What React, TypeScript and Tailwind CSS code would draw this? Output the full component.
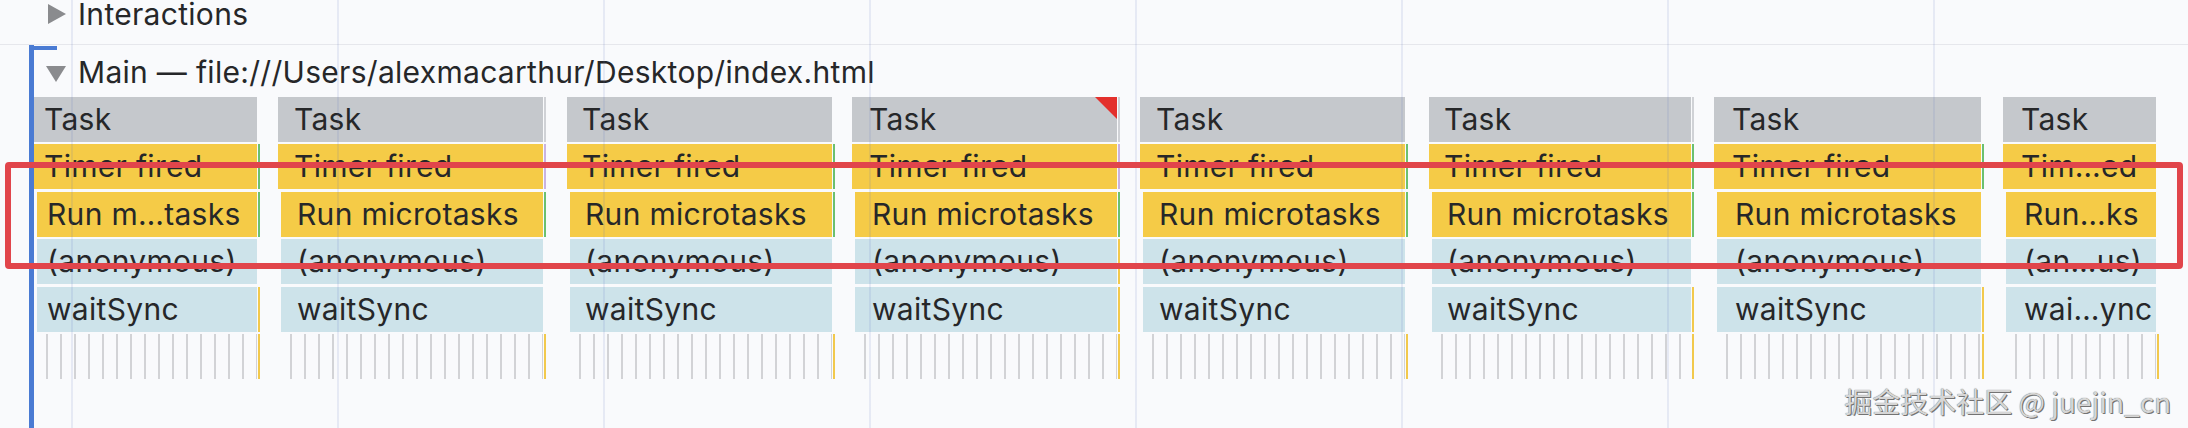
import React from 'react';

interface Column {
  wrap: string;
  pad: string;
  labels: string[];
  flag?: boolean;
  slivers: string[];
}

const columns: Column[] = [
  {
    wrap: 'w-[226px]',
    pad: 'pl-[10px]',
    labels: ['Task', 'Timer fired', 'Run m…tasks', '(anonymous)', 'waitSync'],
    slivers: ['bg-transparent', 'bg-[#6cc070]', 'bg-[#6cc070]', 'bg-transparent', 'bg-[#f2c94c]'],
  },
  {
    wrap: 'ml-[18px] w-[268px]',
    pad: 'pl-[16px]',
    labels: ['Task', 'Timer fired', 'Run microtasks', '(anonymous)', 'waitSync'],
    slivers: ['bg-[#d0d2d6]', 'bg-[#c9b3e0]', 'bg-[#6cc070]', 'bg-transparent', 'bg-transparent'],
  },
  {
    wrap: 'ml-[21px] w-[268px]',
    pad: 'pl-[15px]',
    labels: ['Task', 'Timer fired', 'Run microtasks', '(anonymous)', 'waitSync'],
    slivers: ['bg-transparent', 'bg-[#6cc070]', 'bg-[#6cc070]', 'bg-transparent', 'bg-transparent'],
  },
  {
    wrap: 'ml-[17px] w-[268px]',
    pad: 'pl-[17px]',
    labels: ['Task', 'Timer fired', 'Run microtasks', '(anonymous)', 'waitSync'],
    flag: true,
    slivers: ['bg-[#d0d2d6]', 'bg-[#c9b3e0]', 'bg-[#6cc070]', 'bg-[#f2c94c]', 'bg-[#f2c94c]'],
  },
  {
    wrap: 'ml-[20px] w-[268px]',
    pad: 'pl-[16px]',
    labels: ['Task', 'Timer fired', 'Run microtasks', '(anonymous)', 'waitSync'],
    slivers: ['bg-transparent', 'bg-[#6cc070]', 'bg-[#6cc070]', 'bg-transparent', 'bg-transparent'],
  },
  {
    wrap: 'ml-[21px] w-[265px]',
    pad: 'pl-[15px]',
    labels: ['Task', 'Timer fired', 'Run microtasks', '(anonymous)', 'waitSync'],
    slivers: ['bg-[#d0d2d6]', 'bg-[#6cc070]', 'bg-[#6cc070]', 'bg-transparent', 'bg-[#f2c94c]'],
  },
  {
    wrap: 'ml-[20px] w-[270px]',
    pad: 'pl-[18px]',
    labels: ['Task', 'Timer fired', 'Run microtasks', '(anonymous)', 'waitSync'],
    slivers: ['bg-transparent', 'bg-[#6cc070]', 'bg-transparent', 'bg-transparent', 'bg-[#f2c94c]'],
  },
  {
    wrap: 'ml-[19px] w-[156px]',
    pad: 'pl-[18px]',
    labels: ['Task', 'Tim…ed', 'Run…ks', '(an…us)', 'wai…ync'],
    slivers: ['bg-transparent', 'bg-transparent', 'bg-transparent', 'bg-transparent', 'bg-transparent'],
  },
];

// spacing above each row and the block colour, top to bottom
const rowGap = ['', 'mt-[2px]', 'mt-[3px]', 'mt-[2px]', 'mt-[3px]'];
const rowBg = ['bg-[#c5c8cc]', 'bg-[#f5cb47]', 'bg-[#f5cb47]', 'bg-[#cde3ea]', 'bg-[#cde3ea]'];

function FlameColumn({ col }: { col: Column }) {
  return (
    <div className={`flex shrink-0 flex-col ${col.wrap}`}>
      {col.labels.map((label, i) => (
        <div key={i} className={`flex h-[45px] ${rowGap[i]}`}>
          <div
            className={`relative flex-1 overflow-hidden whitespace-nowrap leading-[45px] ${col.pad} ${rowBg[i]} ${
              i >= 2 ? 'ml-[3px]' : ''
            }`}
          >
            {label}
            {col.flag && i === 0 && (
              <div className="absolute right-0 top-0 h-[22px] w-[22px] bg-[#e3302c] [clip-path:polygon(0_0,100%_0,100%_100%)]" />
            )}
          </div>
          <div className={`ml-px w-[2px] ${col.slivers[i]}`} />
        </div>
      ))}
      <div className="mt-[2px] flex h-[45px]">
        <div className="ml-[12px] flex-1 bg-[repeating-linear-gradient(to_right,#d2d3d6_0px,#d2d3d6_2px,transparent_2px,transparent_14px)]" />
        <div className="ml-px w-[2px] bg-[#f2c94c]" />
      </div>
    </div>
  );
}

export default function App() {
  return (
    <div className="relative h-[428px] w-[2188px] overflow-hidden bg-[#f9fafc] font-['Inter','Liberation_Sans',sans-serif] text-[30px] tracking-[0.3px] text-[#262729]">
      {/* Interactions track */}
      <div className="flex h-[45px] items-start border-b border-[#e6e7ec] pl-[48px]">
        <svg width="18" height="20" viewBox="0 0 18 20" className="mt-[4px] fill-[#8a8b8e]">
          <polygon points="0,0 18,10 0,20" />
        </svg>
        <span className="ml-[12px] leading-[28px]">Interactions</span>
      </div>

      {/* Main track */}
      <div className="relative ml-[29px] h-[383px] border-l-[5px] border-[#4a7bd3]">
        <div className="absolute -left-[5px] top-px h-[4px] w-[28px] bg-[#4a7bd3]" />
        <div className="flex h-[52px] items-start pl-[12px] pt-[12px]">
          <svg width="20" height="16" viewBox="0 0 20 16" className="mt-[9px] fill-[#8a8b8e]">
            <polygon points="0,0 20,0 10,16" />
          </svg>
          <span className="ml-[12px] leading-[30px]">Main — file:///Users/alexmacarthur/Desktop/index.html</span>
        </div>
        <div className="flex">
          {columns.map((col, i) => (
            <FlameColumn key={i} col={col} />
          ))}
        </div>
      </div>

      {/* time grid lines */}
      <div className="pointer-events-none absolute inset-0 bg-[linear-gradient(to_right,rgba(90,110,190,0.12)_0px,rgba(90,110,190,0.12)_2px,transparent_2px)] bg-[length:266px_100%] bg-[position:71px_0px]" />

      {/* annotation box */}
      <div className="pointer-events-none absolute left-[5px] top-[162px] h-[107px] w-[2178px] rounded-[4px] border-[6px] border-[#e1454b]" />

      {/* watermark */}
      <div className="pointer-events-none absolute right-[17px] top-[383px] font-['Noto_Sans_CJK_SC',sans-serif] text-[28px] leading-[36px] tracking-normal text-[#d6d6d6] [text-shadow:0_0_1px_#555,1px_1px_0_#777]">
        掘金技术社区 @ juejin_cn
      </div>
    </div>
  );
}
